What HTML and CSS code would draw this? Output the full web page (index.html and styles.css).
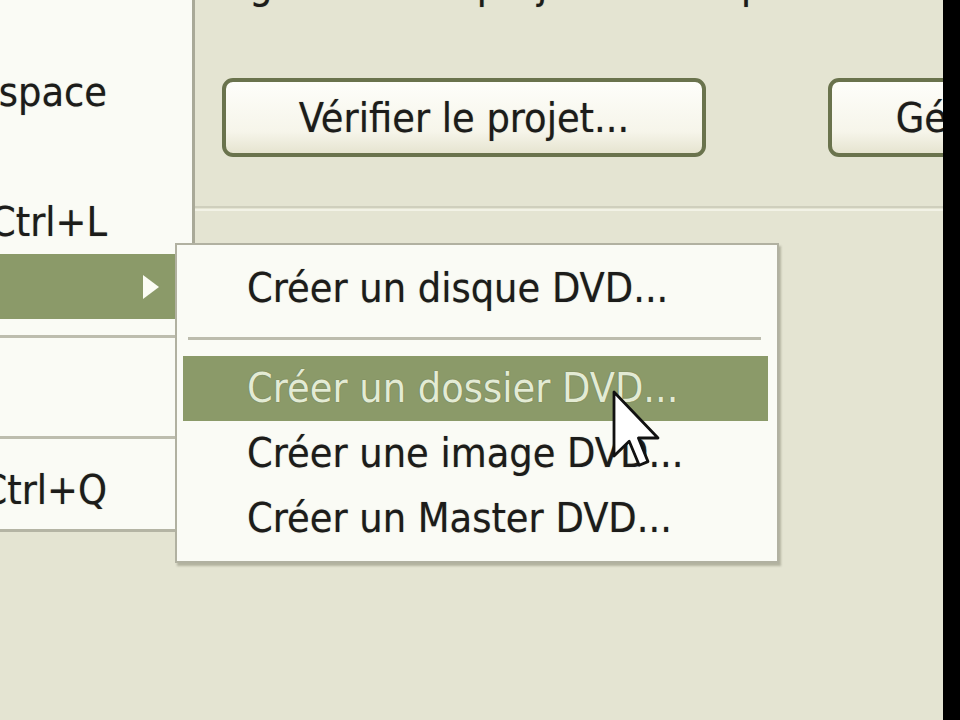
FILE: index.html
```html
<!DOCTYPE html>
<html lang="fr">
<head>
    <meta charset="UTF-8">
    <meta name="viewport" content="width=device-width, initial-scale=1.0">
    <title>Graver le projet</title>
    <link rel="stylesheet" href="styles.css">
</head>
<body>

<div class="screen">
    <div class="window">

        <!-- Dialog behind the menus -->
        <div class="dialog">
            <p class="hint">Le guide de ce projet dans le poste de travail</p>
            <div class="actions">
                <button class="xp-btn">Vérifier le projet...</button>
                <button class="xp-btn">Générer le projet...</button>
            </div>
            <div class="group"></div>
        </div>

        <!-- File menu (opened) -->
        <ul class="menu">
            <li class="menu-item"><span class="label">Nouveau</span><span class="key"></span></li>
            <li class="menu-item"><span class="label">Supprimer</span><span class="key">Espace</span></li>
            <li class="menu-item"><span class="label">Propriétés</span><span class="key"></span></li>
            <li class="menu-item"><span class="label">Lire</span><span class="key">Ctrl+L</span></li>
            <li class="menu-item active">
                <span class="label">Graver</span>
                <svg class="arrow" width="18" height="24" viewBox="0 0 18 24"><path d="M1 0 L17 12 L1 24 Z" fill="#fbfcf4"/></svg>
            </li>
            <li class="menu-sep"></li>
            <li class="menu-item"><span class="label">Imprimer</span><span class="key"></span></li>
            <li class="menu-sep tall"></li>
            <li class="menu-item"><span class="label">Quitter</span><span class="key">Ctrl+Q</span></li>
        </ul>

        <!-- Burn submenu -->
        <ul class="submenu">
            <li class="sub-item">Créer un disque DVD...</li>
            <li class="sub-sep"></li>
            <li class="sub-item active">Créer un dossier DVD...</li>
            <li class="sub-item">Créer une image DVD...</li>
            <li class="sub-item">Créer un Master DVD...</li>
        </ul>

        <!-- Mouse pointer -->
        <svg class="cursor" width="48" height="80" viewBox="0 0 12 20">
            <path d="M0.5 0.5 L0.5 16.5 L4.3 12.8 L6.8 18.8 L9 17.9 L6.6 12 L11.5 12 Z"
                  fill="#fff" stroke="#111" stroke-width="0.7" stroke-linejoin="round"/>
        </svg>
    </div>
    <div class="edge"></div>
</div>

</body>
</html>
```

FILE: styles.css
```css
body {
    margin: 0;
    width: 960px;
    height: 720px;
    overflow: hidden;
    background-color: #e4e4d2; /* olive XP dialog colour */
    font-family: "DejaVu Sans Condensed", "DejaVu Sans", sans-serif;
    font-size: 41px;
    color: #1c1c1a;
    text-shadow: 0 0 1px rgba(20, 20, 10, 0.45); /* soft, slightly heavy text like the capture */
}
.screen {
    display: flex;
    height: 720px;
}
.window {
    position: relative;
    flex: 1;
    overflow: hidden;
}
.edge {
    width: 17px;
    background-color: #000;
}

/* dialog */
.dialog {
    padding-left: 195px;
}
.hint {
    margin: -40px 0 0 0;
    height: 48px;
    line-height: 48px;
    white-space: nowrap;
}
.actions {
    display: flex;
    gap: 122px;
    margin: 70px 0 0 27px;
}
.xp-btn {
    flex: none;
    width: 484px;
    height: 79px;
    border: 4px solid #6a734d;
    border-radius: 11px;
    background: linear-gradient(to bottom, #fefefa, #f6f5ea 70%, #e6e4d0);
    font-family: inherit;
    font-size: 41px;
    color: #1c1c1a;
    text-shadow: inherit;
    padding: 0;
}
.group {
    margin-top: 49px;
    border-top: 2px solid #cfcfbd;
    box-shadow: 0 2px 0 #f2f2e6;
    height: 1px;
}

/* file menu */
.menu {
    position: absolute;
    left: -300px;
    top: -6px;
    width: 492px;
    height: 535px;
    margin: 0;
    padding: 0;
    list-style: none;
    background-color: #fafbf5;
    border-right: 3px solid #a9a998;
    border-bottom: 3px solid #b4b4a4;
}
.menu-item {
    display: flex;
    justify-content: space-between;
    align-items: center;
    height: 65px;
    padding-right: 85px;
}
.menu-item .label {
    padding-left: 40px;
}
.menu-item.active {
    background-color: #8b9a69;
    color: #f0f4e6;
    padding-right: 32px;
}
.menu-sep {
    height: 34px;
    display: flex;
    align-items: center;
}
.menu-sep.tall {
    height: 39px;
}
.menu-sep::after {
    content: "";
    flex: 1;
    border-top: 3px solid #bdbdae;
}

/* submenu */
.submenu {
    position: absolute;
    left: 175px;
    top: 243px;
    width: 585px;
    margin: 0;
    padding: 11px 9px 10px 6px;
    list-style: none;
    background-color: #fafbf5;
    border: 2px solid #b1b1a1;
    box-shadow: 2px 3px 2px rgba(90, 90, 70, 0.35);
}
.sub-item {
    height: 65px;
    line-height: 64px;
    padding-left: 64px;
    white-space: nowrap;
}
.sub-item:first-child {
    height: 64px;
}
.sub-item.active {
    background-color: #8b9a69;
    color: #e3ebd4;
}
.sub-sep {
    height: 36px;
    display: flex;
    align-items: center;
    padding: 0 7px 0 5px;
}
.sub-sep::after {
    content: "";
    flex: 1;
    border-top: 3px solid #bcbcad;
}

.cursor {
    position: absolute;
    left: 612px;
    top: 390px;
}
```
